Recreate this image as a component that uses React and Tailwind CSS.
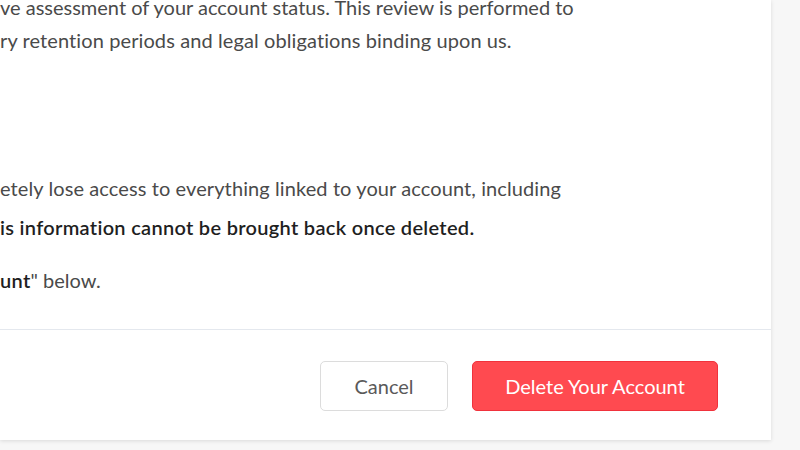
export default function App() {
  const font = { fontFamily: '"Lato", "Open Sans", sans-serif' };
  return (
    <div className="w-[800px] h-[450px] bg-[#f7f7f7] overflow-hidden" style={font}>
      <div className="w-[771px] h-[440px] bg-white shadow-[0_1px_4px_rgba(0,0,0,0.12)] flex flex-col">
        <div className="h-[329px] text-[20px] leading-[36px] text-[#4a4a4a] whitespace-nowrap">
          <div className="-mt-[11px]">ve assessment of your account status. This review is performed to</div>
          <div className="mt-[-3px] tracking-[0.1px]">ry retention periods and legal obligations binding upon us.</div>
          <div className="mt-[112px] tracking-[0.1px]">etely lose access to everything linked to your account, including</div>
          <div className="mt-[3px] font-semibold text-[#1f1f1f] tracking-[0.3px]">is information cannot be brought back once deleted.</div>
          <div className="mt-[17px]"><span className="font-semibold text-[#1f1f1f] tracking-[0.3px]">unt</span>" below.</div>
        </div>
        <div className="border-t border-[#e4e8ee] flex-1 flex justify-end items-start pt-[31px] pr-[53px] gap-[24px]">
          <button className="w-[128px] h-[50px] rounded-[5px] border border-[#dcdcdc] bg-white text-[20px] text-[#5a5a5a]">Cancel</button>
          <button className="w-[246px] h-[50px] rounded-[5px] border border-[#f0323c] bg-[#ff4a50] text-[20px] text-white">Delete Your Account</button>
        </div>
      </div>
    </div>
  );
}
